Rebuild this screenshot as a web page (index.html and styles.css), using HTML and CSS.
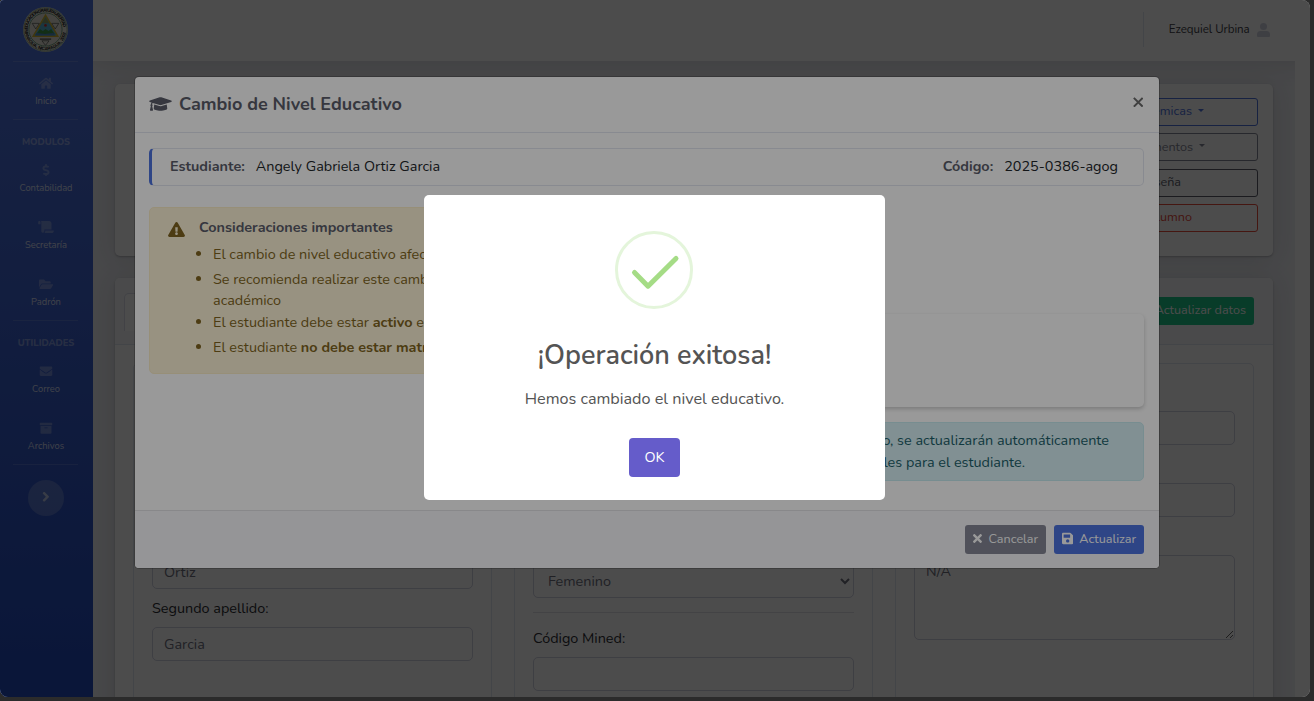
FILE: index.html
```html
<!DOCTYPE html>
<html lang="es">
<head>
<meta charset="utf-8">
<title>Cambio de Nivel Educativo</title>
<link rel="stylesheet" href="styles.css">
</head>
<body>
<div class="app">
  <nav class="sidebar">
    <div class="brand">
      <svg class="logo" viewBox="0 0 44 44">
        <defs><path id="ringTop" d="M4.6 22a17.4 17.4 0 0 1 34.8 0"/><path id="ringBottom" d="M1.8 22a20.2 20.2 0 0 0 40.4 0"/></defs>
        <circle cx="22" cy="22" r="22" fill="#e9e9dc"/>
        <circle cx="22" cy="22" r="21.2" fill="none" stroke="#7c9a80" stroke-width=".8"/>
        <text class="ring-text"><textPath href="#ringTop" textLength="52">EDUCACION GRATUITA LIBERTAD</textPath></text>
        <text class="ring-text"><textPath href="#ringBottom" textLength="60">MANAGUA, NICARAGUA, 2002</textPath></text>
        <circle cx="22" cy="22" r="16.200" fill="#e6e5da" stroke="#5c9070" stroke-width=".8"/>
        <path d="M9 16h7l-3.500 5.500zM28 16h7l-3.500 5.500zM18.500 33h7l-3.500 4.500z" fill="none" stroke="#555" stroke-width=".7"/>
        <path d="M22 8L34 28.500H10z" fill="#58b7d8" stroke="#d6b52d" stroke-width="1.500"/>
        <path d="M22 10l3.500 6h-7z" fill="#8ea06b"/>
        <path d="M13 26.500l3.500-5 3 2 2.500-2 3 2 2.500-2 3.500 5z" fill="#3e9a4c"/>
        <path d="M11.500 27.800l2-2.500 8 1.200 8-1.200 2 2.500z" fill="#4d8dcc"/>
        <circle cx="22" cy="18" r="1.300" fill="#ce3030"/>
        <path d="M16.500 31.300h11" stroke="#555" stroke-width="1.200"/>
      </svg>
    </div>
    <hr class="side-line">
    <a class="side-item"><svg class="si" viewBox="0 0 576 512"><path d="M280.370 148.260L96 300.110V464a16 16 0 0 0 16 16l112.060-.290a16 16 0 0 0 15.920-16V368a16 16 0 0 1 16-16h64a16 16 0 0 1 16 16v95.640a16 16 0 0 0 16 16.050L464 480a16 16 0 0 0 16-16V300L295.670 148.260a12.190 12.190 0 0 0-15.300 0zM571.600 251.470L488 182.560V44.050a12 12 0 0 0-12-12h-56a12 12 0 0 0-12 12v72.610L318.470 43a48 48 0 0 0-61 0L4.340 251.470a12 12 0 0 0-1.600 16.900l25.500 31A12 12 0 0 0 45.150 301l235.220-193.740a12.190 12.190 0 0 1 15.300 0L530.900 301a12 12 0 0 0 16.900-1.600l25.500-31a12 12 0 0 0-1.700-16.930z"/></svg><span>Inicio</span></a>
    <hr class="side-line">
    <div class="side-heading">MODULOS</div>
    <a class="side-item"><svg class="si" viewBox="0 0 288 512"><path d="M209.200 233.400l-108-31.600C88.700 198.200 80 186.500 80 173.500c0-16.300 13.200-29.500 29.500-29.500h66.300c12.200 0 24.200 3.700 34.200 10.500 6.100 4.100 14.300 3.100 19.500-2l34.800-34c7.100-6.900 6.100-18.400-1.800-24.500C238 74.800 207.400 64.100 176 64V16c0-8.800-7.200-16-16-16h-32c-8.800 0-16 7.200-16 16v48h-2.500C45.800 64-5.400 118.700.5 183.600c4.200 46.100 39.400 83.600 83.800 96.600l102.500 30c12.500 3.700 21.200 15.300 21.200 28.300 0 16.300-13.200 29.500-29.500 29.500h-66.300C100 368 88 364.300 78 357.500c-6.100-4.100-14.300-3.100-19.500 2l-34.800 34c-7.100 6.900-6.100 18.400 1.800 24.500 24.500 19.200 55.100 29.900 86.500 30v48c0 8.800 7.200 16 16 16h32c8.800 0 16-7.200 16-16v-48.200c46.600-.9 90.300-28.600 105.700-72.700 21.500-61.600-14.600-124.800-72.500-141.700z"/></svg><span>Contabilidad</span></a>
    <a class="side-item"><svg class="si" viewBox="0 0 640 512"><path d="M48 0C21.530 0 0 21.530 0 48v64c0 8.840 7.160 16 16 16h80V48C96 21.530 74.470 0 48 0zm208 412.570V352h288V96c0-52.940-43.060-96-96-96H111.590C121.740 13.410 128 29.920 128 48v368c0 38.870 34.650 69.650 74.750 63.120C234.220 474 256 444.460 256 412.570zM288 384v32c0 52.930-43.060 96-96 96h336c61.860 0 112-50.140 112-112 0-8.840-7.160-16-16-16H288z"/></svg><span>Secretaría</span></a>
    <a class="side-item"><svg class="si" viewBox="0 0 576 512"><path d="M572.694 292.093L500.270 416.248A63.997 63.997 0 0 1 444.989 448H45.025c-18.523 0-30.064-20.093-20.731-36.093l72.424-124.155A64 64 0 0 1 152 256h399.964c18.523 0 30.064 20.093 20.730 36.093zM152 224h328v-48c0-26.510-21.490-48-48-48H272l-64-64H48C21.490 64 0 85.490 0 112v278.046l69.077-118.418C86.214 242.250 117.989 224 152 224z"/></svg><span>Padrón</span></a>
    <hr class="side-line">
    <div class="side-heading">UTILIDADES</div>
    <a class="side-item"><svg class="si" viewBox="0 0 512 512"><path d="M502.300 190.800c3.900-3.100 9.700-.2 9.700 4.700V400c0 26.500-21.500 48-48 48H48c-26.500 0-48-21.500-48-48V195.600c0-5 5.700-7.800 9.700-4.700 22.400 17.400 52.100 39.500 154.100 113.600 21.100 15.400 56.700 47.800 92.200 47.600 35.700.3 72-32.800 92.300-47.600 102-74.100 131.600-96.300 154-113.700zM256 320c23.200.4 56.600-29.200 73.400-41.400 132.700-96.300 142.800-104.700 173.400-128.700 5.800-4.500 9.200-11.500 9.200-18.900v-19c0-26.500-21.500-48-48-48H48c-26.500 0-48 21.500-48 48v19c0 7.400 3.400 14.300 9.200 18.900 30.600 23.900 40.700 32.400 173.400 128.700 16.800 12.200 50.200 41.800 73.400 41.400z"/></svg><span>Correo</span></a>
    <a class="side-item"><svg class="si" viewBox="0 0 512 512"><path d="M32 448c0 17.700 14.300 32 32 32h384c17.700 0 32-14.300 32-32V160H32v288zm160-212c0-6.600 5.400-12 12-12h104c6.600 0 12 5.400 12 12v8c0 6.600-5.400 12-12 12H204c-6.600 0-12-5.400-12-12v-8zM480 32H32C14.300 32 0 46.300 0 64v48c0 8.800 7.200 16 16 16h480c8.800 0 16-7.200 16-16V64c0-17.700-14.300-32-32-32z"/></svg><span>Archivos</span></a>
    <hr class="side-line">
    <button class="side-toggle"><svg viewBox="0 0 256 512"><path d="M224.300 273l-136 136c-9.400 9.400-24.600 9.400-33.900 0l-22.600-22.600c-9.400-9.400-9.400-24.600 0-33.900l96.400-96.400-96.400-96.400c-9.400-9.400-9.400-24.600 0-33.900L54.300 103c9.400-9.400 24.600-9.400 33.900 0l136 136c9.500 9.400 9.500 24.600.1 34z"/></svg></button>
  </nav>
  <div class="main">
    <header class="topbar">
      <div class="user"><span>Ezequiel Urbina</span><svg viewBox="0 0 13 14"><circle cx="6.500" cy="3.600" r="3.500"/><path d="M0 13v-1.500a3.500 3.500 0 0 1 3.500-3.500h6a3.500 3.500 0 0 1 3.500 3.500V13a1 1 0 0 1-1 1H1a1 1 0 0 1-1-1z"/></svg></div>
    </header>
    <div class="content">
      <section class="card summary">
        <div class="actions">
          <button class="act blue caret">Acciones académicas</button>
          <button class="act gray caret">Documentos</button>
          <button class="act dark">Contraseña</button>
          <button class="act red">Eliminar alumno</button>
        </div>
      </section>
      <section class="card details">
        <div class="card-head"><div class="tab"></div><button class="update">Actualizar datos</button></div>
        <div class="columns">
          <div class="col">
            <label class="field"><span></span><input></label>
            <label class="field"><span></span><input></label>
            <label class="field"><span></span><input value="Ortiz"></label>
            <label class="field"><span>Segundo apellido:</span><input value="Garcia"></label>
          </div>
          <div class="col">
            <label class="field"><span></span><input></label>
            <label class="field"><span></span><input></label>
            <label class="field shifted"><span></span><select><option>Femenino</option></select></label>
            <hr class="rule">
            <label class="field"><span>Código Mined:</span><input></label>
          </div>
          <div class="col">
            <label class="field"><span></span><input></label>
            <label class="field"><span></span><input></label>
            <label class="field"><span></span><textarea>N/A</textarea></label>
          </div>
        </div>
      </section>
    </div>
  </div>

  <div class="backdrop">
    <div class="modal">
      <div class="modal-head">
        <svg class="cap" viewBox="0 0 640 512"><path d="M622.340 153.200L343.400 67.500c-15.200-4.670-31.600-4.670-46.790 0L17.660 153.200c-23.540 7.230-23.540 38.360 0 45.590l48.630 14.940c-10.670 13.190-17.230 29.280-17.880 46.900C38.780 266.150 32 276.110 32 288c0 10.780 5.680 19.850 13.860 25.650L20.330 428.530C18.110 438.520 25.710 448 35.940 448h56.110c10.240 0 17.840-9.480 15.620-19.470L82.140 313.650C90.320 307.850 96 298.780 96 288c0-11.570-6.470-21.250-15.660-26.870.760-15.020 8.440-28.300 20.690-36.720L296.600 284.500c9.060 2.780 26.440 6.250 46.790 0l278.950-85.700c23.550-7.240 23.550-38.360 0-45.600zM352.790 315.090c-28.530 8.760-52.840 3.920-65.590 0l-145.020-44.550L128 384c0 35.350 85.960 64 192 64s192-28.650 192-64l-14.180-113.470-145.030 44.560z"/></svg>
        <h5>Cambio de Nivel Educativo</h5>
        <svg class="close" viewBox="0 0 10 10"><path d="M.8.8l8.400 8.400M9.200.8L.8 9.200"/></svg>
      </div>
      <div class="modal-body">
        <div class="student">
          <b>Estudiante:</b><span class="name">Angely Gabriela Ortiz Garcia</span>
          <b class="code-label">Código:</b><span class="code">2025-0386-agog</span>
        </div>
        <div class="split">
          <div class="warning">
            <svg viewBox="0 0 576 512"><path d="M569.517 440.013C587.975 472.007 564.806 512 527.940 512H48.054c-36.937 0-59.999-40.055-41.577-71.987L246.423 23.985c18.467-32.009 64.720-31.951 83.154 0l239.940 416.028zM288 354c-25.405 0-46 20.595-46 46s20.595 46 46 46 46-20.595 46-46-20.595-46-46-46zm-43.673-165.346l7.418 136c.347 6.364 5.609 11.346 11.982 11.346h48.546c6.373 0 11.635-4.982 11.982-11.346l7.418-136c.375-6.874-5.098-12.654-11.982-12.654h-63.383c-6.884 0-12.356 5.780-11.981 12.654z"/></svg>
            <div>
              <h6>Consideraciones importantes</h6>
              <ul>
                <li>El cambio de nivel educativo afecta al alumno</li>
                <li class="tight">Se recomienda realizar este cambio al inicio<br>académico</li>
                <li>El estudiante debe estar <b>activo</b> en el sistema</li>
                <li>El estudiante <b>no debe estar matriculado</b></li>
              </ul>
            </div>
          </div>
          <div class="right">
            <div class="panel"></div>
            <div class="info"><div>Al cambiar el nivel educativo, se actualizarán automáticamente</div><div class="second">los grados disponibles para el estudiante.</div></div>
          </div>
        </div>
      </div>
      <div class="modal-foot">
        <button class="btn cancel"><svg viewBox="0 0 352 512"><path d="M242.720 256l100.070-100.070c12.280-12.280 12.280-32.190 0-44.480l-22.240-22.240c-12.280-12.280-32.190-12.280-44.480 0L176 189.280 75.930 89.210c-12.280-12.280-32.190-12.280-44.480 0L9.210 111.450c-12.280 12.280-12.280 32.190 0 44.480L109.280 256 9.210 356.070c-12.280 12.280-12.280 32.190 0 44.480l22.240 22.240c12.280 12.280 32.200 12.280 44.480 0L176 322.720l100.070 100.070c12.280 12.280 32.200 12.280 44.480 0l22.240-22.240c12.280-12.280 12.280-32.190 0-44.480L242.720 256z"/></svg>Cancelar</button>
        <button class="btn save"><svg viewBox="0 0 448 512"><path d="M433.941 129.941l-83.882-83.882A48 48 0 0 0 316.118 32H48C21.490 32 0 53.490 0 80v352c0 26.510 21.490 48 48 48h352c26.510 0 48-21.490 48-48V163.882a48 48 0 0 0-14.059-33.941zM224 416c-35.346 0-64-28.654-64-64 0-35.346 28.654-64 64-64s64 28.654 64 64c0 35.346-28.654 64-64 64zm96-304.520V212c0 6.627-5.373 12-12 12H76c-6.627 0-12-5.373-12-12V108c0-6.627 5.373-12 12-12h228.520c3.183 0 6.235 1.264 8.485 3.515l3.480 3.480A11.996 11.996 0 0 1 320 111.480z"/></svg>Actualizar</button>
      </div>
    </div>
  </div>

  <div class="alert-layer">
    <div class="alert">
      <svg class="ok-icon" viewBox="0 0 78 78"><circle cx="39" cy="39" r="37.500"/><path d="M19.500 41.500L33 55.200L61 27.500"/></svg>
      <h2>¡Operación exitosa!</h2>
      <p>Hemos cambiado el nivel educativo.</p>
      <button class="ok">OK</button>
    </div>
  </div>
</div>
</body>
</html>
```

FILE: styles.css
```css
* { box-sizing: border-box; }
body { margin: 0; height: 701px; overflow: hidden; background: #2b2b2b; font: 14.4px/21px Nunito, "Open Sans", "Noto Sans", sans-serif; color: #5a5c69; }
button, input, select, textarea { font: inherit; }
.app { position: relative; display: flex; width: 1310px; height: 697px; overflow: hidden; border-radius: 4px 8px 8px 8px; background: #fff; }

.sidebar { width: 93px; padding: 0 15px 0 13px; flex: none; display: flex; flex-direction: column; align-items: stretch; background: linear-gradient(180deg, #4e73df 10%, #224abe 100%); }
.brand { height: 61px; display: flex; justify-content: center; padding: 7px 1px 0 0; }
.logo { width: 45px; height: 45px; flex: none; }
.ring-text { font: bold 4.4px "Liberation Sans", sans-serif; letter-spacing: 0; fill: #111; }
.side-line { width: 100%; height: 1px; border: 0; margin: 0; background: rgba(255,255,255,.15); flex: none; }
.side-item { height: 57.2px; flex: none; display: flex; flex-direction: column; align-items: center; padding: 15px 0 0 1px; font-size: 9.36px; line-height: 14px; color: rgba(255,255,255,.8); }
.si { height: 12.5px; width: 16px; flex: none; fill: rgba(255,255,255,.3); }
.side-item span { margin-top: 4.500px; white-space: nowrap; }
.side-heading { height: 28.500px; padding: 14.500px 0 0 1px; text-align: center; font-size: 9.36px; line-height: 14px; font-weight: 800; color: rgba(255,255,255,.4); margin: 0 -10px; flex: none; }
.side-toggle { width: 36px; height: 36px; margin: 15px auto 0; border: 0; border-radius: 50%; background: rgba(255,255,255,.2); display: flex; align-items: center; justify-content: center; padding: 0 0 3px 1px; }
.side-toggle svg { height: 15.500px; fill: rgba(255,255,255,.6); }

.main { flex: 1; display: flex; flex-direction: column; min-width: 0; }
.topbar { height: 61px; flex: none; background: #fff; display: flex; justify-content: flex-end; padding: 12px 40px 0 0; position: relative; box-shadow: 0 2px 24px rgba(58,59,69,.15); clip-path: inset(0 15px -30px 0); }
.user { height: 35px; border-left: 1px solid #e3e6f0; padding-left: 24.500px; display: flex; align-items: center; font-size: 11.52px; color: #3a3b45; gap: 7.300px; }
.user svg { width: 13px; height: 14px; fill: #d1d3e2; }
.content { flex: 1; width: 1202px; background: #f0f1f6; padding: 22.600px 22px 0; display: flex; flex-direction: column; gap: 22px; overflow: hidden; }
.card { background: #fff; border-radius: 5px; flex: none; box-shadow: 0 2px 24px rgba(58,59,69,.15), 0 1px 2px rgba(58,59,69,.3); }
.summary { height: 172px; padding: 14.400px 15px; display: flex; justify-content: flex-end; }
.actions { width: 200px; display: flex; flex-direction: column; gap: 7.400px; }
.act { height: 28px; flex: none; display: flex; align-items: center; justify-content: flex-end; background: none; border: 1px solid; border-radius: 3px; font-size: 12.6px; padding: 0; }
.caret::after { content: ""; border: 3.500px solid transparent; border-top-color: currentColor; border-bottom: 0; margin-left: 6px; margin-top: -1px; }
.blue { color: #4e73df; padding: 0 53px 2px 0; }
.gray { color: #858796; padding: 0 52px 2px 0; }
.dark { color: #5a5c69; border-color: #5a5c69; padding: 0 76px 2px 0; }
.red { color: #e74a3b; padding: 0 65px 3px 0; }
.details { height: 500px; }
.card-head { height: 67px; background: #f8f9fc; border-bottom: 1px solid #e3e6f0; border-radius: 5px 5px 0 0; display: flex; align-items: flex-start; justify-content: space-between; padding: 15.400px 19px 0 9px; }
.tab { width: 110px; height: 38px; border: 1px solid #dddfeb; border-bottom: 0; border-radius: 5px 5px 0 0; background: #fff; }
.update { margin-top: 4px; width: 130px; height: 28px; border: 0; border-radius: 3px; background: #1cc88a; color: #fff; font-size: 12.6px; text-align: right; padding: 0 8px 2px; }
.columns { display: grid; grid-template-columns: 359px 359px 359px; gap: 22px; padding: 18.400px 19px 0 18px; }
.col { height: 420px; border: 1px solid #e3e6f0; border-radius: 5px; padding: 9px 18px; }
.field { display: block; color: #2c2d33; }
.field > span { display: block; height: 38px; padding-top: 9px; }
.field input, .field select, .field textarea { display: block; width: 321px; height: 34px; border: 1px solid #d1d3e2; border-radius: 5px; background: #fff; color: #6e707e; padding: 5px 11px; margin: 0; outline: 0; }
.field select { padding: 5px 10px; }
.field textarea { height: 85px; resize: both; }
.shifted { padding-top: 9px; }
.rule { height: 1px; border: 0; margin: 14px 0 6px; background: #e3e3e6; }

.backdrop, .alert-layer { position: absolute; inset: 0; display: flex; justify-content: center; }
.backdrop { background: rgba(0,0,0,.5); align-items: flex-start; padding: 77px 16px 0 0; }
.modal { width: 1024px; height: 491px; background: #fff; border-radius: 4px; box-shadow: 0 0 0 1px rgba(0,0,0,.2); display: flex; flex-direction: column; overflow: hidden; }
.modal-head { height: 56px; flex: none; display: flex; align-items: center; padding: 0 16px 2px 14px; border-bottom: 1px solid #e3e6f0; }
.cap { width: 23px; height: 18px; fill: #5a5c69; }
.modal-head h5 { margin: 1px auto 0 7px; font-size: 18px; font-weight: 700; }
.close { width: 10.500px; height: 10.500px; fill: none; stroke: #6b6b6b; stroke-width: 1.900; margin-bottom: 3px; }
.modal-body { flex: 1; padding: 15px 15px 0 14px; }
.student { height: 38px; display: flex; align-items: center; border: 1px solid #e3e6f0; border-left: 3px solid #4e73df; border-radius: 5px; padding: 0 25px 2px 18px; }
.student span { color: #212529; margin-left: 11px; }
.student b { font-weight: 700; }
.code-label { margin-left: auto; }
.split { display: flex; justify-content: space-between; padding-top: 21px; }
.warning { width: 487px; height: 167px; display: flex; background: #fdf3d8; border: 1px solid #fceec9; border-radius: 5px; color: #806520; padding: 9px 17px; }
.warning svg { width: 17px; height: 15px; margin: 5px 14px 0 1px; fill: #806520; flex: none; }
.warning h6 { margin: 0; font-size: 14.4px; font-weight: 700; line-height: 21px; color: #5a5c69; }
.warning ul { margin: 6px 0 0; padding-left: 14px; white-space: nowrap; }
.warning li { margin-bottom: 4px; }
.warning .tight { margin-bottom: 1px; }
.right { width: 487px; padding-top: 107px; }
.panel { height: 93px; border-radius: 5px; background: #fff; box-shadow: 0 2px 4px rgba(0,0,0,.2); margin-bottom: 15px; }
.info { height: 59px; background: #d7f1f5; border: 1px solid #c7ebf1; border-radius: 5px; color: #1c606a; text-align: right; padding: 6px 34px 0 0; line-height: 22px; white-space: nowrap; }
.second { padding-right: 84px; }
.modal-foot { height: 58px; flex: none; border-top: 1px solid #e3e3e6; background: #f8f9fc; display: flex; justify-content: flex-end; gap: 8px; padding: 14px 15px 0; }
.btn { height: 29px; border: 0; border-radius: 3px; color: #fff; font-size: 12.6px; display: flex; align-items: center; padding: 0 8px 2.500px; }
.btn svg { height: 13px; fill: #fff; }
.cancel { width: 81px; background: #858796; justify-content: space-between; }
.save { width: 90px; background: #4e73df; justify-content: space-between; }

.alert-layer { background: rgba(0,0,0,.4); align-items: center; padding: 0 1px 2px 0; }
.alert { width: 461px; height: 305px; background: #fff; border-radius: 5px; display: flex; flex-direction: column; align-items: center; padding-top: 36px; color: #545454; }
.ok-icon { width: 78px; height: 78px; flex: none; fill: none; margin-right: 1px; }
.ok-icon circle { stroke: #e4f5db; stroke-width: 3; }
.ok-icon path { stroke: #a5dc86; stroke-width: 5; stroke-linecap: round; stroke-linejoin: round; }
.alert h2 { margin: 29px 0 0; font-size: 27px; line-height: 36px; font-weight: 600; }
.alert p { margin: 13px 0 0; font-size: 16.2px; line-height: 24px; }
.ok { margin-top: 27px; width: 51px; height: 39px; border: 0; border-radius: 4px; background: #655cca; color: #fff; font-size: 14.4px; padding: 0; }
```
